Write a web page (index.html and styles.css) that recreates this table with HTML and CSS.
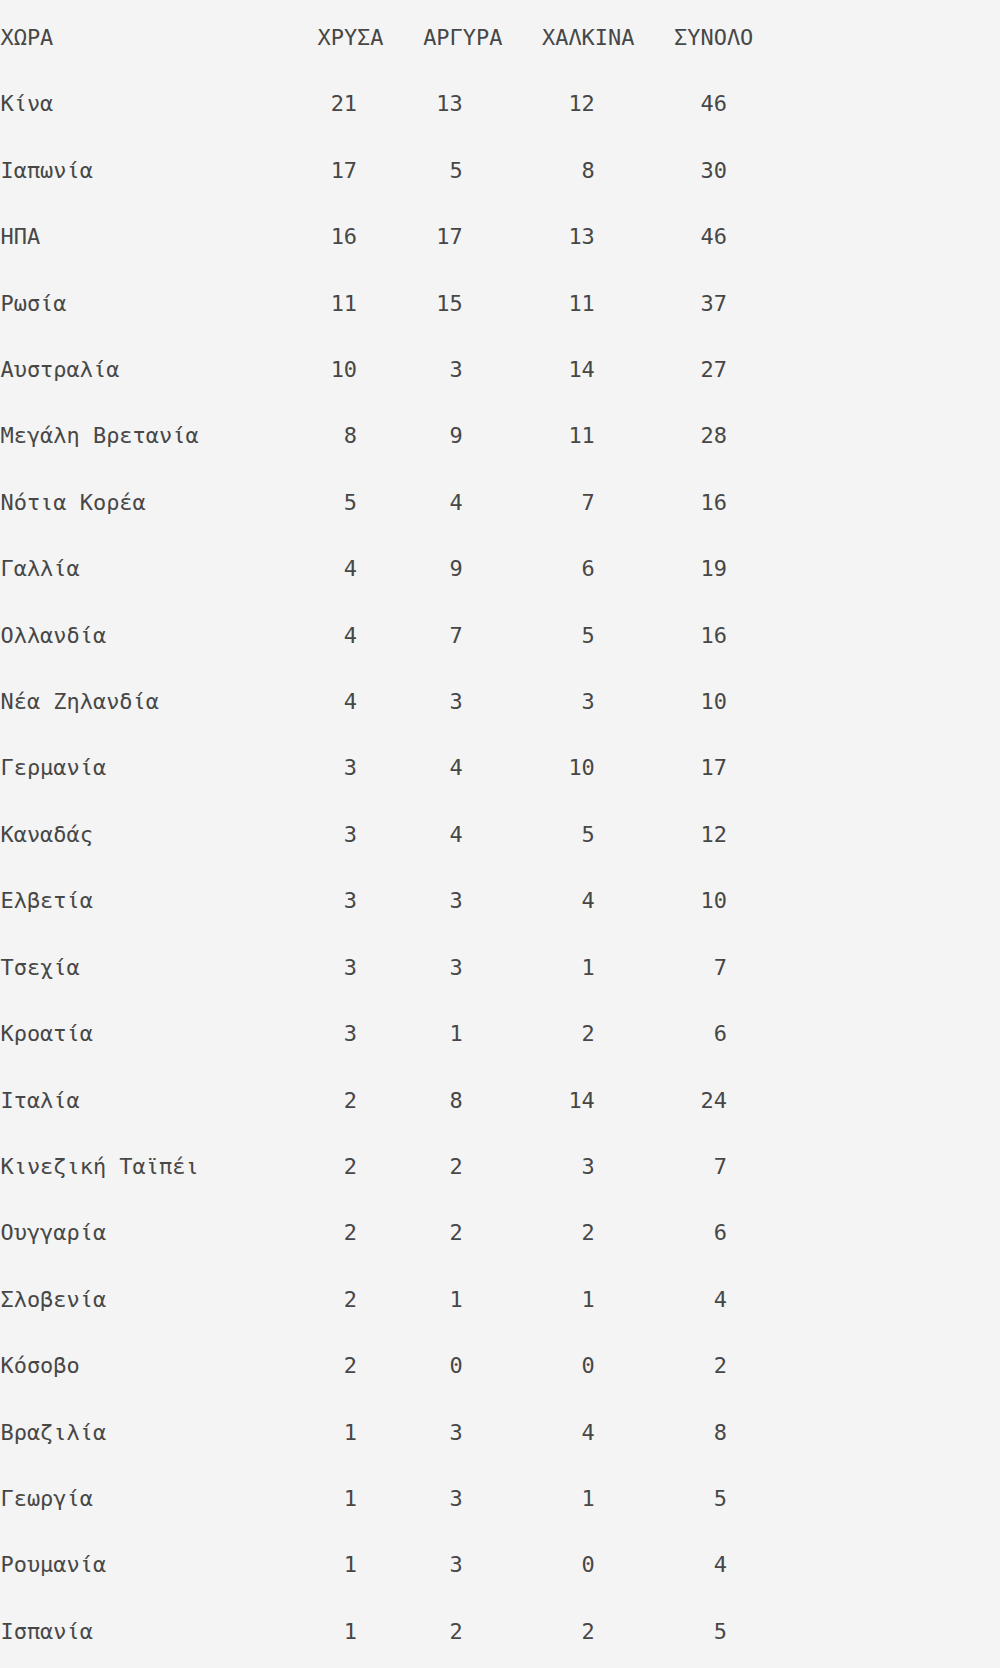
FILE: index.html
```html
<!DOCTYPE html>
<html lang="el">
<head>
<meta charset="utf-8">
<title>Μετάλλια</title>
<link rel="stylesheet" href="styles.css">
</head>
<body>
<div class="table">
  <div class="row head"><span>ΧΩΡΑ</span><span>ΧΡΥΣΑ</span><span>ΑΡΓΥΡΑ</span><span>ΧΑΛΚΙΝΑ</span><span>ΣΥΝΟΛΟ</span></div>
  <div class="row"><span>Κίνα</span><span class="g">21</span><span class="s">13</span><span class="b">12</span><span class="t">46</span></div>
  <div class="row"><span>Ιαπωνία</span><span class="g">17</span><span class="s">5</span><span class="b">8</span><span class="t">30</span></div>
  <div class="row"><span>ΗΠΑ</span><span class="g">16</span><span class="s">17</span><span class="b">13</span><span class="t">46</span></div>
  <div class="row"><span>Ρωσία</span><span class="g">11</span><span class="s">15</span><span class="b">11</span><span class="t">37</span></div>
  <div class="row"><span>Αυστραλία</span><span class="g">10</span><span class="s">3</span><span class="b">14</span><span class="t">27</span></div>
  <div class="row"><span>Μεγάλη Βρετανία</span><span class="g">8</span><span class="s">9</span><span class="b">11</span><span class="t">28</span></div>
  <div class="row"><span>Νότια Κορέα</span><span class="g">5</span><span class="s">4</span><span class="b">7</span><span class="t">16</span></div>
  <div class="row"><span>Γαλλία</span><span class="g">4</span><span class="s">9</span><span class="b">6</span><span class="t">19</span></div>
  <div class="row"><span>Ολλανδία</span><span class="g">4</span><span class="s">7</span><span class="b">5</span><span class="t">16</span></div>
  <div class="row"><span>Νέα Ζηλανδία</span><span class="g">4</span><span class="s">3</span><span class="b">3</span><span class="t">10</span></div>
  <div class="row"><span>Γερμανία</span><span class="g">3</span><span class="s">4</span><span class="b">10</span><span class="t">17</span></div>
  <div class="row"><span>Καναδάς</span><span class="g">3</span><span class="s">4</span><span class="b">5</span><span class="t">12</span></div>
  <div class="row"><span>Ελβετία</span><span class="g">3</span><span class="s">3</span><span class="b">4</span><span class="t">10</span></div>
  <div class="row"><span>Τσεχία</span><span class="g">3</span><span class="s">3</span><span class="b">1</span><span class="t">7</span></div>
  <div class="row"><span>Κροατία</span><span class="g">3</span><span class="s">1</span><span class="b">2</span><span class="t">6</span></div>
  <div class="row"><span>Ιταλία</span><span class="g">2</span><span class="s">8</span><span class="b">14</span><span class="t">24</span></div>
  <div class="row"><span>Κινεζική Ταϊπέι</span><span class="g">2</span><span class="s">2</span><span class="b">3</span><span class="t">7</span></div>
  <div class="row"><span>Ουγγαρία</span><span class="g">2</span><span class="s">2</span><span class="b">2</span><span class="t">6</span></div>
  <div class="row"><span>Σλοβενία</span><span class="g">2</span><span class="s">1</span><span class="b">1</span><span class="t">4</span></div>
  <div class="row"><span>Κόσοβο</span><span class="g">2</span><span class="s">0</span><span class="b">0</span><span class="t">2</span></div>
  <div class="row"><span>Βραζιλία</span><span class="g">1</span><span class="s">3</span><span class="b">4</span><span class="t">8</span></div>
  <div class="row"><span>Γεωργία</span><span class="g">1</span><span class="s">3</span><span class="b">1</span><span class="t">5</span></div>
  <div class="row"><span>Ρουμανία</span><span class="g">1</span><span class="s">3</span><span class="b">0</span><span class="t">4</span></div>
  <div class="row"><span>Ισπανία</span><span class="g">1</span><span class="s">2</span><span class="b">2</span><span class="t">5</span></div>
</div>
</body>
</html>
```
FILE: styles.css
```css
html, body {
  margin: 0;
  padding: 0;
  background: #f4f4f4;
}
body {
  font-family: "DejaVu Sans Mono", "Liberation Mono", monospace;
  font-size: 21.95px;
  color: #474747;
}
.table {
  padding: 5px 0 0 0.5px;
}
.row {
  display: grid;
  grid-template-columns: 24ch 8ch 9ch 10ch 6ch;
  line-height: 66.4px;
  white-space: pre;
}
.g, .s {
  width: 3ch;
  text-align: right;
}
.b, .t {
  width: 4ch;
  text-align: right;
}
```
